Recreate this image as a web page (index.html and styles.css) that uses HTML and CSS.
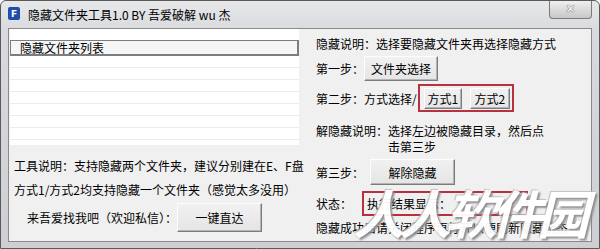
FILE: index.html
```html
<!DOCTYPE html>
<html>
<head>
  <title>隐藏文件夹工具1.0</title>
  <link rel="stylesheet" href="styles.css">
</head>
<body>

<div class="window">
  <div class="titlebar">
    <span class="app-icon">F</span>
    <span class="title">隐藏文件夹工具1.0 BY 吾爱破解 wu 杰</span>
    <div class="close">&#x2715;</div>
  </div>

  <div class="client">
    <div class="left">
      <div class="listview">
        <div class="list-head">隐藏文件夹列表</div>
        <div class="list-body"></div>
      </div>
      <p class="note first">工具说明：支持隐藏两个文件夹，建议分别建在E、F盘</p>
      <p class="note">方式1/方式2均支持隐藏一个文件夹（感觉太多没用）</p>
      <div class="contact">
        <span>来吾爱找我吧（欢迎私信）：</span>
        <button class="btn btn-go">一键直达</button>
      </div>
    </div>

    <div class="right">
      <div class="line desc">隐藏说明：选择要隐藏文件夹再选择隐藏方式</div>
      <div class="row step1">
        <span>第一步：</span>
        <button class="btn btn-folder">文件夹选择</button>
      </div>
      <div class="row step2">
        <span>第二步：方式选择/</span>
        <div class="mark modes">
          <button class="btn btn-mode">方式1</button>
          <button class="btn btn-mode">方式2</button>
        </div>
      </div>
      <div class="line undesc">解隐藏说明：选择左边被隐藏目录，然后点</div>
      <div class="line indent">击第三步</div>
      <div class="row step3">
        <span>第三步：</span>
        <button class="btn btn-unhide">解除隐藏</button>
      </div>
      <div class="row status">
        <span>状态：</span>
        <div class="mark result">执行结果显示：</div>
      </div>
      <div class="line tip">隐藏成功后请关闭程序再打开以便刷新隐藏状态</div>
    </div>
  </div>

  <div class="watermark">人人软件园</div>
</div>

</body>
</html>
```

FILE: styles.css
```css
body {
  margin: 0;
  font-family: "Noto Sans CJK SC", "DejaVu Sans", sans-serif;
  font-size: 12px;
  color: #000;
}

.window {
  position: relative;
  width: 600px;
  height: 249px;
  box-sizing: border-box;
  border: 1px solid #5a5a5a;
  border-radius: 6px 6px 0 0;
  background: linear-gradient(#e6e8ea, #d8dadd 30px, #cdcfd2);
  padding: 0 7px 6px 7px;
  display: flex;
  flex-direction: column;
  overflow: hidden;
}

.titlebar {
  height: 27px;
  display: flex;
  align-items: flex-start;
}

.app-icon {
  margin-top: 6px;
  width: 12px;
  height: 13px;
  border-radius: 2px;
  background: #1f4fa8;
  color: #fff;
  font: bold 9px "DejaVu Sans", sans-serif;
  display: flex;
  align-items: center;
  justify-content: center;
}

.title {
  margin: 5px 0 0 8px;
  line-height: 17px;
}

.close {
  margin-left: auto;
  margin-top: -1px;
  width: 43px;
  height: 19px;
  box-sizing: border-box;
  border: 1px solid #7a7a7a;
  border-top: none;
  border-radius: 0 0 4px 4px;
  background: linear-gradient(#f2f2f2, #dcdcdc 50%, #c8c8c8);
  color: #fff;
  font: bold 12px "DejaVu Sans", sans-serif;
  text-shadow: 0 0 1px #555, 0 0 1px #555;
  display: flex;
  align-items: center;
  justify-content: center;
}

.client {
  flex: 1;
  display: flex;
  border: 1px solid #8a8a8a;
  background: #f0f0f0;
}

.left {
  width: 291px;
  display: flex;
  flex-direction: column;
}

.listview {
  margin-left: 1px;
  width: 289px;
  height: 116px;
  box-sizing: border-box;
  padding-top: 11px;
  background: #fff;
}

.list-head {
  height: 16px;
  box-sizing: border-box;
  border: 1px solid #7d7d7d;
  border-width: 1px 2px 2px 1px;
  background: #f6f6f6;
  padding-left: 9px;
  line-height: 13px;
}

.list-body {
  height: 89px;
  background: repeating-linear-gradient(to bottom, #fff 0 11px, #ebebeb 11px 12px);
}

.note {
  margin: 0;
  padding-left: 5px;
  line-height: 24px;
  white-space: nowrap;
}

.note.first {
  margin-top: 9px;
}

.contact {
  display: flex;
  align-items: center;
  height: 29px;
  margin-top: 1px;
  padding-left: 18px;
}

.btn {
  font-family: inherit;
  font-size: 12px;
  color: #000;
  padding: 0;
  box-sizing: border-box;
  border: 1px solid;
  border-color: #fdfdfd #7c7c7c #7c7c7c #fdfdfd;
  box-shadow: inset -1px -1px 0 #b4b4b4;
  background: linear-gradient(#f1f1f1, #e5e5e5);
}

.btn-go {
  width: 85px;
  height: 29px;
}

.right {
  flex: 1;
  padding-left: 16px;
  display: flex;
  flex-direction: column;
}

.line {
  line-height: 16px;
  white-space: nowrap;
}

.row {
  display: flex;
  align-items: center;
}

.desc {
  margin-top: 7px;
}

.step1 {
  margin-top: 3px;
  height: 26px;
}

.btn-folder {
  width: 74px;
  height: 25px;
}

.step2 {
  margin-top: 3px;
  height: 28px;
}

.mark {
  box-sizing: border-box;
  border: 2px solid #b8313f;
}

.modes {
  margin-left: 1px;
  width: 96px;
  height: 28px;
  display: flex;
  align-items: center;
  padding-left: 4px;
  gap: 8px;
}

.btn-mode {
  width: 38px;
  height: 21px;
}

.btn-mode + .btn-mode {
  width: 40px;
}

.undesc {
  margin-top: 11px;
}

.indent {
  padding-left: 72px;
}

.step3 {
  margin-top: 4px;
  height: 26px;
}

.btn-unhide {
  margin-left: 6px;
  width: 85px;
  height: 26px;
}

.status {
  margin-top: 6px;
  height: 25px;
}

.result {
  margin-left: 10px;
  width: 166px;
  height: 25px;
  padding-left: 3px;
  line-height: 21px;
}

.tip {
  margin-top: 4px;
}

.watermark {
  position: absolute;
  left: 352px;
  top: 176px;
  font-family: "Noto Sans CJK SC", sans-serif;
  font-size: 52px;
  font-weight: bold;
  font-style: italic;
  letter-spacing: -6px;
  line-height: 70px;
  color: #fff;
  opacity: 0.95;
  text-shadow: 2px 2px 2px #8c8c8c, -1px -1px 1px #bdbdbd;
  pointer-events: none;
}
```
